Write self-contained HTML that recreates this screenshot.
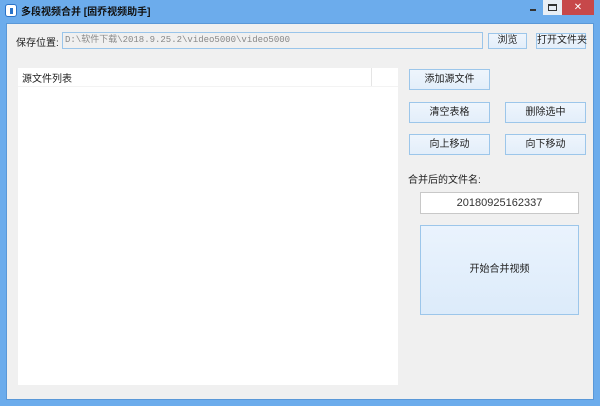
<!DOCTYPE html>
<html><head><meta charset="utf-8"><style>
body{margin:0;width:600px;height:406px;overflow:hidden;font-family:"Liberation Sans","Noto Sans CJK SC",sans-serif;font-size:10px;color:#222}
.win{position:absolute;left:0;top:0;width:600px;height:406px;background:#6cacec}
.client{position:absolute;left:6px;top:23px;width:588px;height:377px;background:#f0f0f0;border:1px solid #5a98d8;box-sizing:border-box}
.a{position:absolute;white-space:nowrap}
.btn{position:absolute;box-sizing:border-box;border:1px solid #9cc6ea;background:linear-gradient(#eef5fc,#e3eefa);text-align:center;font-size:10px;color:#222;white-space:nowrap}
</style></head><body>
<div class="win">
 <div class="a" style="left:5px;top:4px;width:12px;height:13px;background:#fff;border-radius:3px;border:1px solid #2a73c8;box-sizing:border-box"><div style="margin:3px 0 0 4px;width:3px;height:6px;background:#2a73c8"></div></div>
 <div class="a" style="left:21px;top:3px;font-size:10px;font-weight:bold;color:#111">多段视频合并 [固乔视频助手]</div>
 <div class="a" style="left:530px;top:9px;width:6px;height:2px;background:#333"></div>
 <div class="a" style="left:543px;top:0;width:19px;height:15px;background:#e8eef5"><div style="margin:4px 0 0 5px;width:9px;height:7px;border:1px solid #333;border-top-width:2px;box-sizing:border-box"></div></div>
 <div class="a" style="left:562px;top:0;width:32px;height:15px;background:#c7484a;color:#fff;text-align:center;font-size:10px;line-height:15px">✕</div>
 <div class="client">
  <div class="a" style="left:9px;top:10px">保存位置:</div>
  <div class="a" style="left:55px;top:8px;width:421px;height:17px;border:1px solid #9ac5ea;background:#f0f0f0;box-sizing:border-box;font-family:'Liberation Mono','Noto Sans CJK SC',monospace;font-size:9px;color:#888;line-height:15px;padding-left:2px">D:\软件下载\2018.9.25.2\video5000\video5000</div>
  <div class="btn" style="left:481px;top:9px;width:39px;height:16px;line-height:14px">浏览</div>
  <div class="btn" style="left:529px;top:9px;width:50px;height:16px;line-height:14px">打开文件夹</div>
  <div class="a" style="left:11px;top:44px;width:380px;height:317px;background:#fff">
   <div class="a" style="left:0;top:0;width:380px;height:18px;border-bottom:1px solid #f3f3f3"></div>
   <div class="a" style="left:353px;top:0;width:1px;height:18px;background:#e5e5e5"></div>
   <div class="a" style="left:4px;top:2px">源文件列表</div>
  </div>
  <div class="btn" style="left:402px;top:45px;width:81px;height:21px;line-height:19px">添加源文件</div>
  <div class="btn" style="left:402px;top:78px;width:81px;height:21px;line-height:19px">清空表格</div>
  <div class="btn" style="left:498px;top:78px;width:81px;height:21px;line-height:19px">删除选中</div>
  <div class="btn" style="left:402px;top:110px;width:81px;height:21px;line-height:19px">向上移动</div>
  <div class="btn" style="left:498px;top:110px;width:81px;height:21px;line-height:19px">向下移动</div>
  <div class="a" style="left:401px;top:147px">合并后的文件名:</div>
  <div class="a" style="left:413px;top:168px;width:159px;height:22px;border:1px solid #c8c8c8;background:#fff;box-sizing:border-box;text-align:center;line-height:20px;font-size:11px;color:#333">20180925162337</div>
  <div class="btn" style="left:413px;top:201px;width:159px;height:90px;line-height:88px;background:linear-gradient(#eaf3fd,#dcebfa)">开始合并视频</div>
 </div>
</div>
</body></html>
